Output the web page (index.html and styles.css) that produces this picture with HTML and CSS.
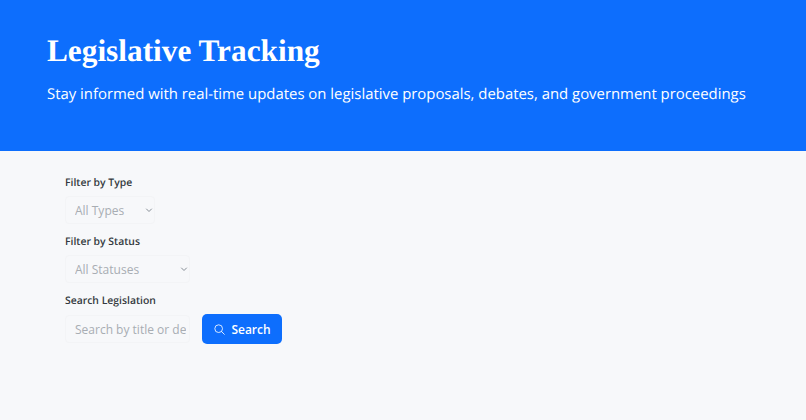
FILE: index.html
```html
<!DOCTYPE html>
<html lang="en">
<head>
  <meta charset="UTF-8" />
  <meta name="viewport" content="width=device-width, initial-scale=1.0"/>
  <title>Legislative Tracking</title>
  <link rel="stylesheet" href="styles.css">
</head>
<body>

  <header class="hero">
    <h1>Legislative Tracking</h1>
    <p>Stay informed with real-time updates on legislative proposals, debates, and government proceedings</p>
  </header>

  <main class="filters">
    <label class="filter-label" for="type">Filter by Type</label>
    <div class="select-wrap">
      <select id="type" class="type-select">
        <option>All Types</option>
      </select>
      <svg class="chevron" viewBox="0 0 16 16" width="8" height="8"><path d="M3 6l5 5 5-5" fill="none" stroke="currentColor" stroke-width="2" stroke-linecap="round" stroke-linejoin="round"/></svg>
    </div>

    <label class="filter-label" for="status">Filter by Status</label>
    <div class="select-wrap">
      <select id="status" class="status-select">
        <option>All Statuses</option>
      </select>
      <svg class="chevron" viewBox="0 0 16 16" width="8" height="8"><path d="M3 6l5 5 5-5" fill="none" stroke="currentColor" stroke-width="2" stroke-linecap="round" stroke-linejoin="round"/></svg>
    </div>

    <label class="filter-label" for="search">Search Legislation</label>
    <div class="search-row">
      <input id="search" type="text" placeholder="Search by title or description"/>
      <button type="button">
        <svg viewBox="0 0 16 16" width="11" height="11"><circle cx="6.8" cy="6.8" r="5.6" fill="none" stroke="currentColor" stroke-width="1.2"/><path d="M11 11l4 4" fill="none" stroke="currentColor" stroke-width="1.2" stroke-linecap="round"/></svg>
        Search
      </button>
    </div>
  </main>

</body>
</html>
```

FILE: styles.css
```css
* {
  box-sizing: border-box;
}
body {
  margin: 0;
  height: 420px;
  overflow: hidden;
  background: #f7f8fa;
  font-family: 'Open Sans', sans-serif;
  color: #212529;
  text-rendering: geometricPrecision;
}
.hero {
  height: 151px;
  padding: 32px 47px 0;
  background: #0d6efd;
  color: #fff;
}
h1 {
  margin: 0 0 12px;
  font-family: 'Liberation Serif', serif;
  font-size: 31.3px;
  font-weight: 700;
  line-height: 38px;
}
.hero p {
  margin: 0;
  font-size: 14.9px;
  line-height: 24px;
  white-space: nowrap;
}
.filters {
  padding: 24px 65px 0;
}
.filter-label {
  display: block;
  margin-bottom: 5px;
  font-size: 10.4px;
  font-weight: 600;
  line-height: 16px;
  color: #343a40;
}
.select-wrap {
  position: relative;
  width: fit-content;
  margin-bottom: 10px;
}
select, input {
  display: block;
  height: 28px;
  padding: 0 3px 0 9px;
  border: 1px solid #f3f4f6;
  border-radius: 4px;
  background: #f7f8fa;
  font-family: 'Open Sans', sans-serif;
  font-size: 12px;
  color: #a8adb3;
}
select {
  appearance: none;
}
.type-select {
  width: 90px;
}
.status-select {
  width: 125px;
}
.chevron {
  position: absolute;
  top: 10px;
  right: 2px;
  color: #868e96;
  pointer-events: none;
}
.search-row {
  display: flex;
  align-items: center;
  gap: 12px;
}
input {
  width: 125px;
}
input::placeholder {
  color: #a8adb3;
  opacity: 1;
}
button {
  display: flex;
  align-items: center;
  justify-content: center;
  gap: 6px;
  width: 80px;
  height: 30px;
  padding: 0 0 0 1px;
  border: 0;
  border-radius: 5px;
  background: #0d6efd;
  color: #fff;
  font-family: 'Open Sans', sans-serif;
  font-size: 12px;
  font-weight: 600;
}
```
